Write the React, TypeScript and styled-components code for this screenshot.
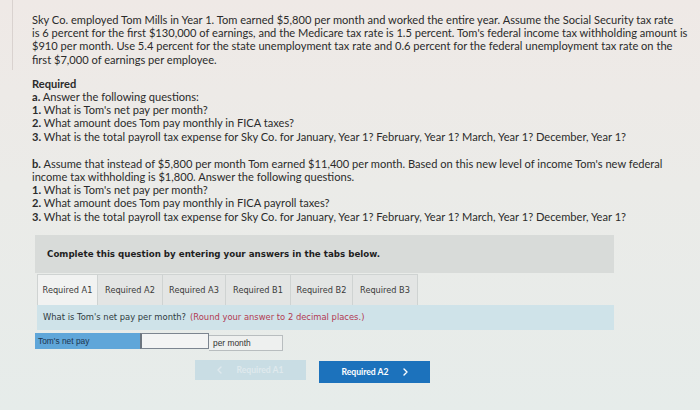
import React from "react";
import styled, { createGlobalStyle } from "styled-components";

const Global = createGlobalStyle`
  html, body { margin: 0; padding: 0; }
  body {
    width: 700px;
    height: 410px;
    overflow: hidden;
    background: linear-gradient(180deg, #efe9e6 0%, #ebebe8 45%, #e6ecea 100%);
  }
`;

const Page = styled.div`
  position: relative;
  width: 700px;
  height: 410px;
  box-sizing: border-box;
  padding: 13px 0 0 32px;
  font-family: "Lato", "Open Sans", sans-serif;
  color: #2b2b2b;
`;

const EdgeLine = styled.div`
  position: absolute;
  left: 12px;
  top: 0;
  width: 1px;
  height: 70px;
  background: #d9d2cf;
`;

const Para = styled.div<{ $gap?: number }>`
  font-size: 11.1px;
  line-height: 13.2px;
  margin-bottom: ${(p) => p.$gap ?? 0}px;
`;

const Line = styled.div`
  white-space: nowrap;
`;

const B = styled.span`
  font-weight: 700;
`;

const Work = styled.div`
  margin-left: 3px;
  width: 579px;
  font-family: "DejaVu Sans", Verdana, sans-serif;
`;

const Banner = styled.div`
  height: 38px;
  background: #d8dbd9;
  display: flex;
  align-items: center;
  padding-left: 12px;
  font-size: 8.7px;
  font-weight: 700;
  color: #1f1f1f;
`;

const Tabs = styled.div`
  display: flex;
  margin-top: 1px;
  padding-left: 2px;
`;

const Tab = styled.div<{ $active?: boolean; $w: number }>`
  width: ${(p) => p.$w}px;
  height: 31px;
  box-sizing: border-box;
  display: flex;
  align-items: center;
  justify-content: center;
  font-size: 8.2px;
  color: #3a3a3a;
  background: ${(p) => (p.$active ? "#f1f2f1" : "#e3e5e4")};
  border: 1px solid #cfd3d2;
  border-bottom: none;
  margin-right: -1px;
`;

const Question = styled.div`
  margin-left: 2px;
  height: 25px;
  background: #cfe3e9;
  display: flex;
  align-items: center;
  padding-left: 6px;
  font-size: 8.4px;
  color: #2e3a3e;
`;

const Hint = styled.span`
  color: #b23a52;
  margin-left: 4px;
`;

const AnswerRow = styled.div`
  display: flex;
  margin-top: 3px;
  height: 16px;
`;

const Label = styled.div`
  width: 105px;
  background: #5fa6d9;
  font-family: "Liberation Sans", Arial, sans-serif;
  font-size: 8.4px;
  color: #1c3550;
  display: flex;
  align-items: center;
  padding-left: 3px;
  box-sizing: border-box;
`;

const Input = styled.div`
  width: 69px;
  box-sizing: border-box;
  background: #f3f4f4;
  border: 1px solid #7c8590;
  border-left: 2px solid #6c757f;
`;

const Unit = styled.div`
  width: 74px;
  box-sizing: border-box;
  background: #eef0ef;
  border: 1px solid #b8bdbf;
  border-left: none;
  font-family: "Liberation Sans", Arial, sans-serif;
  font-size: 8.4px;
  color: #333;
  display: flex;
  align-items: center;
  padding-left: 4px;
  margin-top: 2px;
  height: 16px;
`;

const Nav = styled.div`
  display: flex;
  gap: 13px;
  margin-top: 11px;
  margin-left: 160px;
`;

const NavButton = styled.div<{ $disabled?: boolean }>`
  width: 111px;
  height: ${(p) => (p.$disabled ? 20 : 22)}px;
  margin-top: ${(p) => (p.$disabled ? 0 : 1)}px;
  background: ${(p) => (p.$disabled ? "#c9dde4" : "#1c72bc")};
  color: ${(p) => (p.$disabled ? "#dfe9ed" : "#ffffff")};
  display: flex;
  align-items: center;
  justify-content: center;
  gap: 14px;
  font-family: "Lato", sans-serif;
  font-size: 8.6px;
  font-weight: 700;
`;

const Chevron = ({ dir }: { dir: "left" | "right" }) => (
  <svg width="5" height="8" viewBox="0 0 5 8" fill="none">
    <path
      d={dir === "right" ? "M1 1 L4 4 L1 7" : "M4 1 L1 4 L4 7"}
      stroke="currentColor"
      strokeWidth="1.4"
      strokeLinecap="round"
      strokeLinejoin="round"
    />
  </svg>
);

export default function App() {
  return (
    <>
      <Global />
      <Page>
        <EdgeLine />
        <Para $gap={11}>
          <Line>Sky Co. employed Tom Mills in Year 1. Tom earned $5,800 per month and worked the entire year. Assume the Social Security tax rate</Line>
          <Line>is 6 percent for the first $130,000 of earnings, and the Medicare tax rate is 1.5 percent. Tom's federal income tax withholding amount is</Line>
          <Line>$910 per month. Use 5.4 percent for the state unemployment tax rate and 0.6 percent for the federal unemployment tax rate on the</Line>
          <Line>first $7,000 of earnings per employee.</Line>
        </Para>
        <Para $gap={14}>
          <Line><B>Required</B></Line>
          <Line><B>a.</B> Answer the following questions:</Line>
          <Line><B>1.</B> What is Tom's net pay per month?</Line>
          <Line><B>2.</B> What amount does Tom pay monthly in FICA taxes?</Line>
          <Line><B>3.</B> What is the total payroll tax expense for Sky Co. for January, Year 1? February, Year 1? March, Year 1? December, Year 1?</Line>
        </Para>
        <Para $gap={12}>
          <Line><B>b.</B> Assume that instead of $5,800 per month Tom earned $11,400 per month. Based on this new level of income Tom's new federal</Line>
          <Line>income tax withholding is $1,800. Answer the following questions.</Line>
          <Line><B>1.</B> What is Tom's net pay per month?</Line>
          <Line><B>2.</B> What amount does Tom pay monthly in FICA payroll taxes?</Line>
          <Line><B>3.</B> What is the total payroll tax expense for Sky Co. for January, Year 1? February, Year 1? March, Year 1? December, Year 1?</Line>
        </Para>
        <Work>
          <Banner>Complete this question by entering your answers in the tabs below.</Banner>
          <Tabs>
            <Tab $active $w={61}>Required A1</Tab>
            <Tab $w={66}>Required A2</Tab>
            <Tab $w={64}>Required A3</Tab>
            <Tab $w={66}>Required B1</Tab>
            <Tab $w={63}>Required B2</Tab>
            <Tab $w={66}>Required B3</Tab>
          </Tabs>
          <Question>
            What is Tom's net pay per month?
            <Hint>(Round your answer to 2 decimal places.)</Hint>
          </Question>
          <AnswerRow>
            <Label>Tom's net pay</Label>
            <Input />
            <Unit>per month</Unit>
          </AnswerRow>
          <Nav>
            <NavButton $disabled>
              <Chevron dir="left" />
              Required A1
            </NavButton>
            <NavButton>
              Required A2
              <Chevron dir="right" />
            </NavButton>
          </Nav>
        </Work>
      </Page>
    </>
  );
}
